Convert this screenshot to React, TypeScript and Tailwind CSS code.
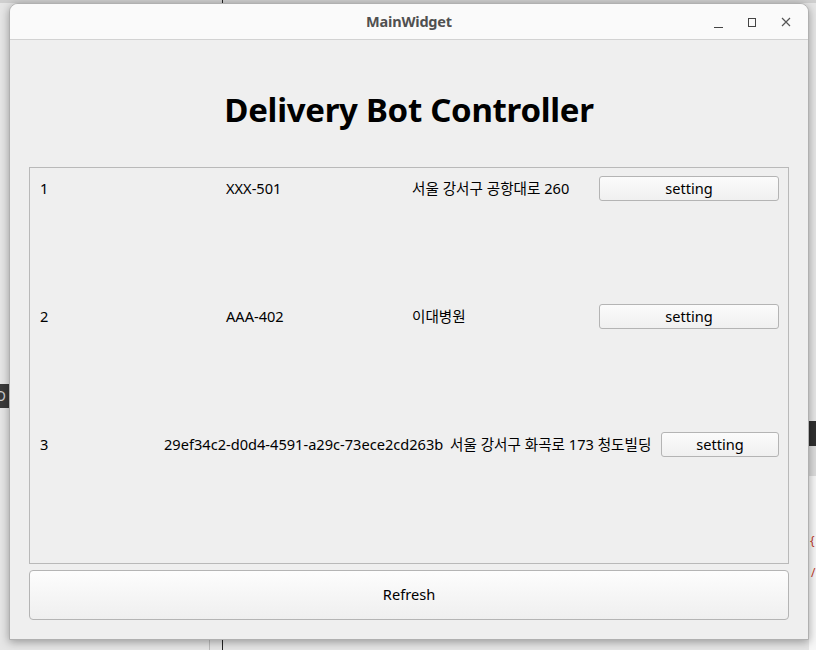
import React from "react";

const rows = [
  {
    id: "1",
    name: "XXX-501",
    addr: "서울 강서구 공항대로 260",
    w: ["w-[180px]", "w-[180px]", "w-[181px]", "w-[180px]"],
  },
  {
    id: "2",
    name: "AAA-402",
    addr: "이대병원",
    w: ["w-[180px]", "w-[180px]", "w-[181px]", "w-[180px]"],
  },
  {
    id: "3",
    name: "29ef34c2-d0d4-4591-a29c-73ece2cd263b",
    addr: "서울 강서구 화곡로 173 청도빌딩",
    w: ["w-[118px]", "w-[280px]", "w-[205px]", "w-[118px]"],
  },
];

const font = {
  fontFamily: '"Noto Sans", "Noto Sans CJK KR", sans-serif',
};

export default function App() {
  return (
    <div className="relative w-[816px] h-[650px] overflow-hidden bg-[#e6e6e6]" style={font}>
      {/* desktop behind the window */}
      <div className="absolute left-0 top-0 w-[816px] h-[3px] bg-[#cfcfcf]" />
      <div className="absolute left-[222px] top-0 w-px h-[3px] bg-[#222]" />
      <div className="absolute left-[209px] top-[640px] w-px h-[10px] bg-[#bdbdbd]" />
      <div className="absolute left-[222px] top-[640px] w-px h-[10px] bg-[#222]" />
      <div className="absolute left-0 top-[384px] w-[9px] h-[24px] overflow-hidden bg-[#3a3a3a]">
        <span className="block text-[#cfcfcf] text-[14px] leading-[24px] -ml-[5px]">O</span>
      </div>
      <div className="absolute left-[809px] top-[421px] w-[7px] h-[25px] bg-[#2f2f2f]" />
      <div className="absolute left-[809px] top-[446px] w-[7px] h-[30px] bg-[#dcdcdc]" />
      <div className="absolute left-[809px] top-[476px] w-[7px] h-[174px] bg-[#f7f7f7]" />
      <div className="absolute left-[810px] top-[532px] text-[12px] text-[#c0392b]">{"{"}</div>
      <div className="absolute left-[811px] top-[564px] text-[12px] text-[#c0392b]">/</div>

      {/* window */}
      <div className="absolute left-[9px] top-[3px] w-[800px] h-[637px] flex flex-col bg-[#efefef] rounded-t-[9px] border border-[#b0b0b0] shadow-[0_2px_10px_rgba(0,0,0,0.35)] overflow-hidden">
        <div className="relative h-[36px] shrink-0 flex items-center justify-center bg-[#fafafa] border-b border-[#d2d2d2]">
          <span className="text-[14.5px] font-bold text-[#505050] tracking-[-0.2px]">MainWidget</span>
          <div className="absolute right-0 top-0 h-full flex items-center">
            <svg width="34" height="36" viewBox="0 0 34 36">
              <line x1="12" y1="23.5" x2="21" y2="23.5" stroke="#444" strokeWidth="1" />
            </svg>
            <svg width="34" height="36" viewBox="0 0 34 36">
              <rect x="12.5" y="14.5" width="7" height="8" fill="none" stroke="#444" strokeWidth="1" />
            </svg>
            <svg width="34" height="36" viewBox="0 0 34 36" className="mr-[4px]">
              <path d="M12 14 L20 22 M20 14 L12 22" stroke="#555" strokeWidth="1.2" />
            </svg>
          </div>
        </div>

        <div className="flex-1 flex flex-col px-[19px]">
          <h1 className="h-[127px] flex items-center justify-center text-[33px] font-bold text-black tracking-[-0.3px] leading-none pt-[12px]">
            Delivery Bot Controller
          </h1>

          <div className="h-[397px] border border-[#b9b9b9] pt-[8px] pl-[10px] pr-[9px] flex flex-col">
            {rows.map((r) => (
              <div key={r.id} className="h-[128px] flex gap-[6px] items-start text-[14.6px] text-black">
                <div className={`${r.w[0]} h-[25px] flex items-center`}>{r.id}</div>
                <div className={`${r.w[1]} h-[25px] flex items-center whitespace-nowrap`}>{r.name}</div>
                <div className={`${r.w[2]} h-[25px] flex items-center whitespace-nowrap`}>{r.addr}</div>
                <button
                  className={`${r.w[3]} h-[25px] flex items-center justify-center rounded-[3px] border border-[#b4b4b4] bg-gradient-to-b from-[#fbfbfb] to-[#f0f0f0] text-[14.6px] text-black`}
                >
                  setting
                </button>
              </div>
            ))}
          </div>

          <button className="mt-[6px] h-[50px] rounded-[4px] border border-[#b4b4b4] bg-gradient-to-b from-[#fdfdfd] to-[#efefef] text-[14.6px] text-black">
            Refresh
          </button>
        </div>
      </div>
    </div>
  );
}
